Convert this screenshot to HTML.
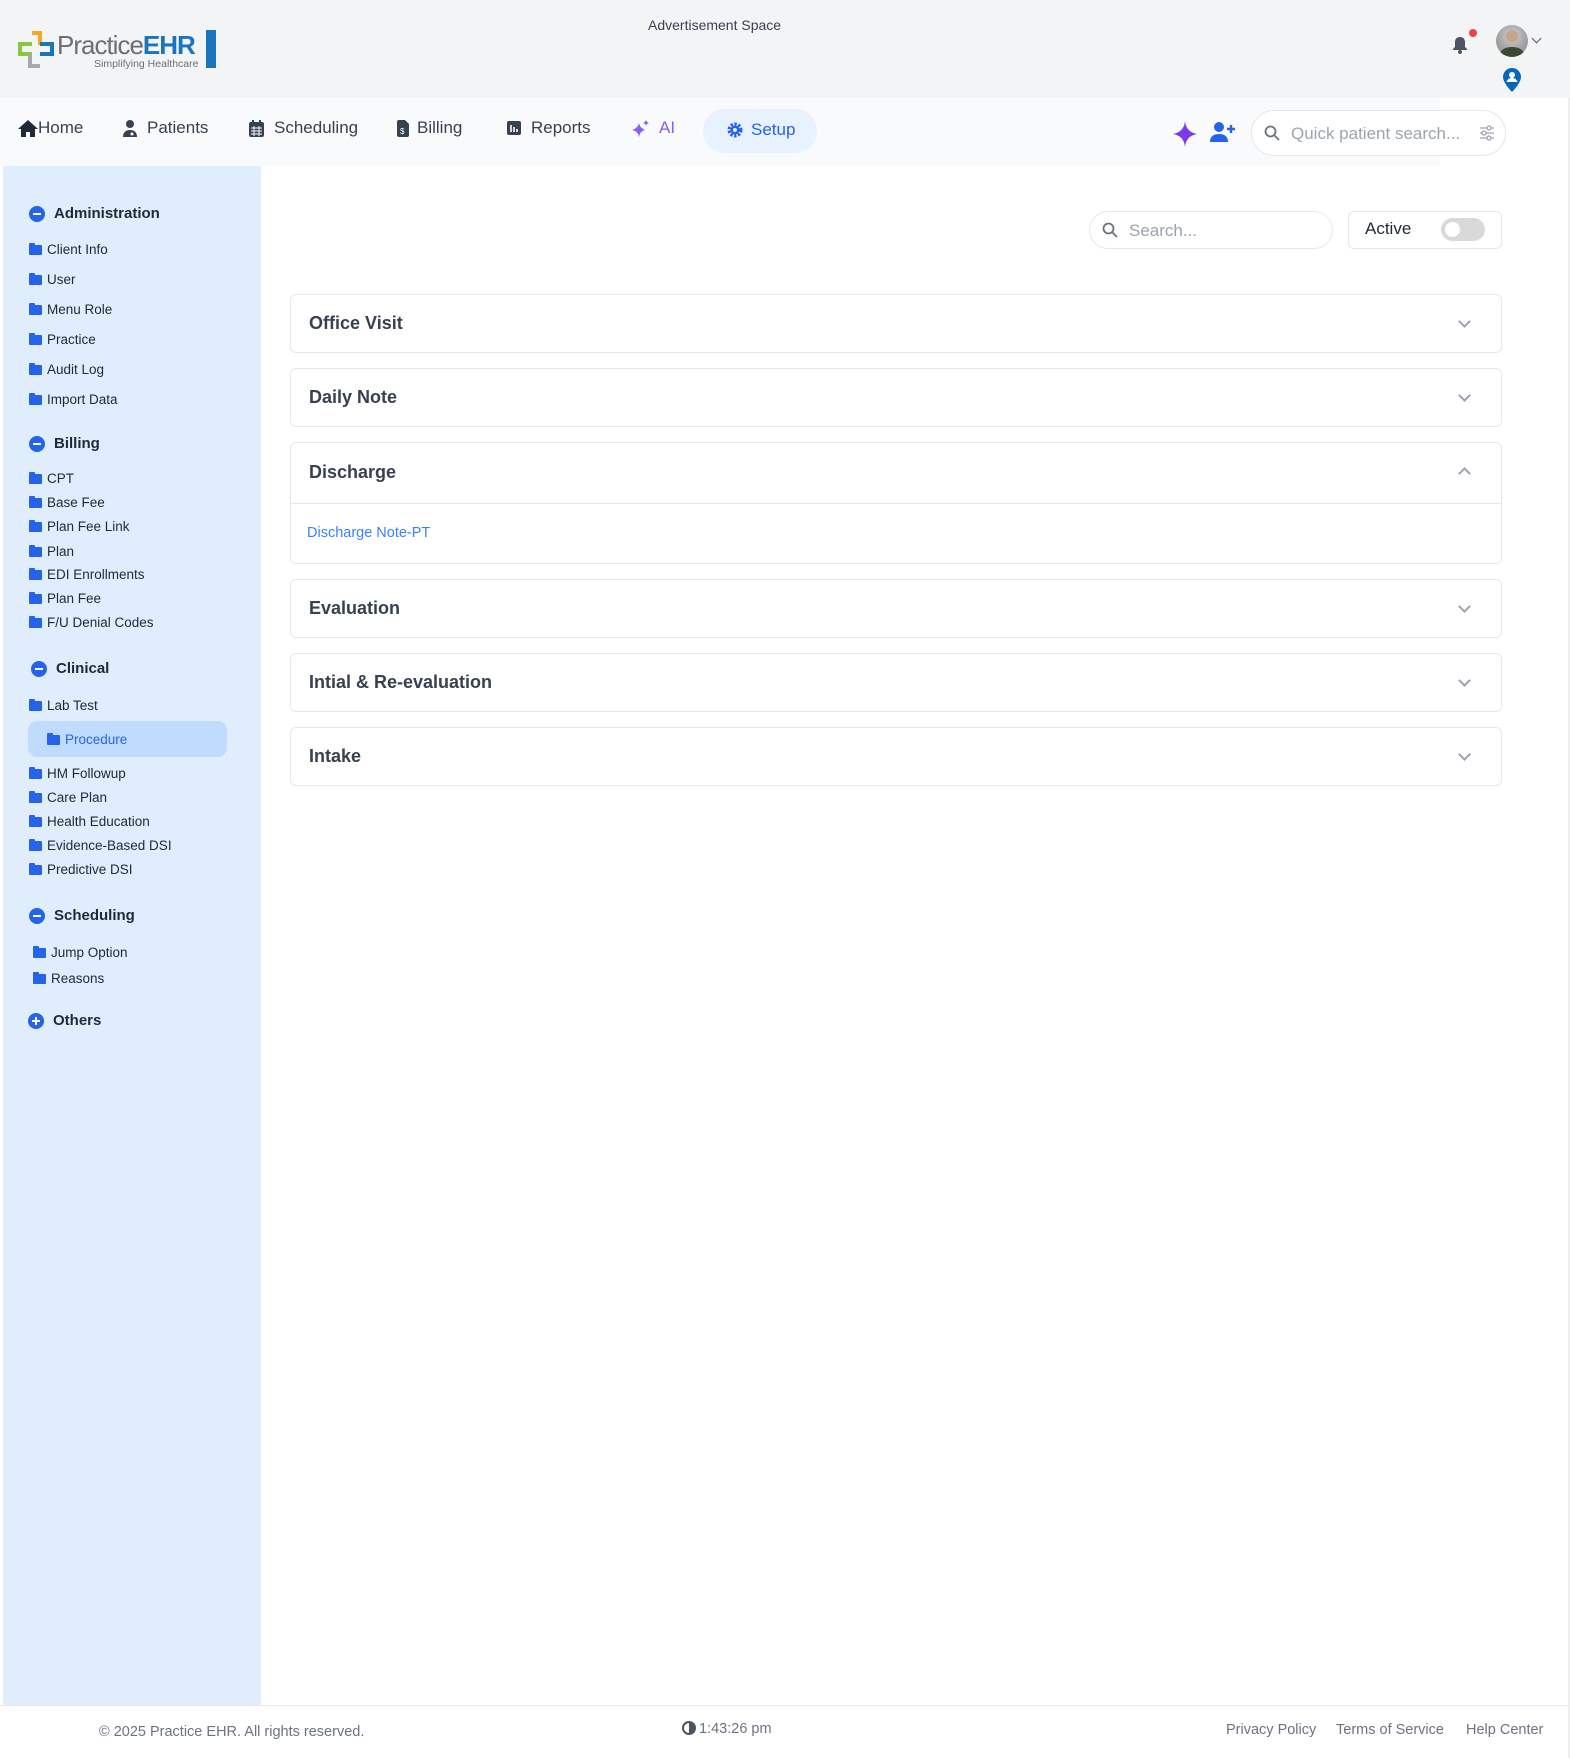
<!DOCTYPE html>
<html><head><meta charset="utf-8">
<style>
*{box-sizing:border-box;margin:0;padding:0}
body{width:1570px;height:1758px;position:relative;background:#fff;font-family:"Liberation Sans",sans-serif;color:#374151;overflow:hidden}
.a{position:absolute;white-space:nowrap}
.hdr{left:0;top:0;width:1570px;height:98px;background:#f3f4f6}
.nav{left:0;top:98px;width:1440px;height:68px;background:#f8fafc}
.side{left:3px;top:166px;width:258px;height:1540px;background:#e0edfc}
.navi{top:118px;font-size:17px;color:#374151;display:flex;align-items:center;gap:8px}
.sh{font-size:15px;font-weight:bold;color:#1f2937;display:flex;align-items:center;gap:9px}
.min{width:16px;height:16px;border-radius:50%;background:#2563eb;position:relative}
.min:after{content:"";position:absolute;left:4px;top:7px;width:8px;height:2px;background:#fff}
.plus:before{content:"";position:absolute;left:7px;top:4px;width:2px;height:8px;background:#fff}
.si{font-size:13.5px;color:#1f2937;display:flex;align-items:center;gap:5px}
.fd{width:13px;height:10px;background:#2563eb;border-radius:1px;position:relative;display:inline-block}
.fd:before{content:"";position:absolute;left:0;top:-2px;width:6px;height:3px;background:#2563eb;border-radius:1px 1px 0 0}
.pn{left:290px;width:1212px;height:59px;border:1px solid #e5e7eb;border-radius:6px;background:#fff}
.pt{position:absolute;left:18px;top:18px;font-size:18px;font-weight:bold;color:#374151}
.chev{position:absolute;right:32px;top:22px;width:9px;height:9px;border-right:2px solid #9ca3af;border-bottom:2px solid #9ca3af;transform:rotate(45deg)}
.ft{font-size:14.5px;color:#6b7280;top:1722px}
</style></head><body>
<div class="a hdr"></div>
<div class="a nav"></div>
<!-- logo -->
<svg class="a" style="left:16px;top:30px" width="40" height="40" viewBox="0 0 40 40">
<path d="M16 1h10v14h-4V5h-6z" fill="#f5a623"/>
<path d="M2 12h14v4H6v6h10v4H2z" fill="#8cc63f"/>
<path d="M12 24h4v10h8v4H12z" fill="#a7a9ac"/>
<path d="M24 12h14v14H24v-4h10v-6H24z" fill="#1a75bc"/>
</svg>
<div class="a" style="left:57px;top:30px;font-size:26px;color:#6d6e71;letter-spacing:-1px">Practice<span style="color:#1a75bc;font-weight:bold">EHR</span></div>
<div class="a" style="left:94px;top:58px;font-size:10.5px;color:#6d6e71">Simplifying Healthcare</div>
<div class="a" style="left:206px;top:30px;width:10px;height:38px;background:#1a75bc"></div>
<div class="a" style="left:648px;top:17px;font-size:14px;color:#374151">Advertisement Space</div>
<!-- bell, avatar -->
<svg class="a" style="left:1452px;top:36px" width="16" height="18" viewBox="0 0 16 18"><path d="M8 1c-3 0-5 2-5 5v5l-2 2v1h14v-1l-2-2V6c0-3-2-5-5-5z" fill="#4b5563"/><circle cx="8" cy="16" r="2" fill="#4b5563"/></svg>
<div class="a" style="left:1469px;top:29px;width:8px;height:8px;border-radius:50%;background:#ef4444"></div>
<div class="a" style="left:1496px;top:25px;width:32px;height:32px;border-radius:50%;background:radial-gradient(circle at 50% 35%,#c9a48a 0 22%,#bdbdbd 24%,#9e9e9e 60%);overflow:hidden"><div style="position:absolute;left:4px;top:22px;width:24px;height:14px;border-radius:50%;background:#3b4a32"></div></div>
<div class="a" style="left:1533px;top:35px;width:7px;height:7px;border-right:1.5px solid #4b5563;border-bottom:1.5px solid #4b5563;transform:rotate(45deg)"></div>
<svg class="a" style="left:1503px;top:68px" width="18" height="24" viewBox="0 0 18 24"><path d="M9 0C4 0 0 4 0 9c0 6 9 15 9 15s9-9 9-15c0-5-4-9-9-9z" fill="#0b67b5"/><circle cx="9" cy="7" r="3" fill="#fff"/><path d="M3.5 14c1-3 3-4 5.5-4s4.5 1 5.5 4z" fill="#fff"/></svg>
<!-- nav -->
<div class="a navi" style="left:18px"><svg width="20" height="17" viewBox="0 0 20 17"><path d="M10 0L0 9h3v8h5v-5h4v5h5V9h3z" fill="#1f2937"/></svg><span style="margin-left:-8px">Home</span></div>
<div class="a navi" style="left:123px"><svg width="14" height="18" viewBox="0 0 14 18"><circle cx="7" cy="5" r="4" fill="#374151"/><path d="M0 18c0-5 3-7 7-7s7 2 7 7z" fill="#374151"/><circle cx="9" cy="15" r="1.5" fill="#f8fafc"/></svg><span style="margin-left:2px">Patients</span></div>
<div class="a navi" style="left:249px"><svg width="15" height="17" viewBox="0 0 15 17"><rect x="0" y="2" width="15" height="15" rx="2" fill="#374151"/><rect x="3" y="0" width="2" height="4" fill="#374151"/><rect x="10" y="0" width="2" height="4" fill="#374151"/><path d="M2 8h11M2 11h11M2 14h11M5 6v10M10 6v10" stroke="#f8fafc" stroke-width="1"/></svg><span style="margin-left:2px">Scheduling</span></div>
<div class="a navi" style="left:397px"><svg width="12" height="17" viewBox="0 0 12 17"><path d="M0 2q0-2 2-2h6l4 4v11q0 2-2 2H2q-2 0-2-2z" fill="#374151"/><text x="3" y="14" font-size="8" fill="#fff" font-family="Liberation Sans">$</text></svg><span>Billing</span></div>
<div class="a navi" style="left:507px"><svg width="14" height="14" viewBox="0 0 14 14"><rect width="14" height="14" rx="2" fill="#374151"/><path d="M4 4v7M7 6v5M10 8v3" stroke="#fff" stroke-width="1.6"/></svg><span style="margin-left:2px">Reports</span></div>
<div class="a navi" style="left:632px;color:#8b5cf6"><svg width="17" height="17" viewBox="0 0 17 17"><path d="M7 3q1 5 6 7q-5 1-6 7q-1-6-7-7q6-2 7-7z" fill="#8b5cf6"/><path d="M14 0q.5 2 3 3q-2.5 .5-3 3q-.5-2.5-3-3q2.5-1 3-3z" fill="#8b5cf6"/></svg><span style="margin-left:2px">AI</span></div>
<div class="a" style="left:703px;top:109px;width:114px;height:44px;border-radius:22px;background:#e8f1fe"></div>
<div class="a navi" style="left:727px;top:120px;color:#2563eb"><svg width="16" height="16" viewBox="0 0 16 16"><circle cx="8" cy="8" r="5.5" fill="none" stroke="#2563eb" stroke-width="4" stroke-dasharray="2.2 1.4"/><circle cx="8" cy="8" r="4.5" fill="#2563eb"/><circle cx="8" cy="8" r="2" fill="#e8f1fe"/></svg><span>Setup</span></div>
<svg class="a" style="left:1173px;top:121px" width="24" height="26" viewBox="0 0 24 26"><path d="M12 0Q13 11 24 13Q13 15 12 26Q11 15 0 13Q11 11 12 0z" fill="#7c3aed"/></svg>
<svg class="a" style="left:1210px;top:122px" width="26" height="20" viewBox="0 0 26 20"><circle cx="9" cy="5" r="5" fill="#2563eb"/><path d="M0 20c0-6 4-8 9-8s9 2 9 8z" fill="#2563eb"/><path d="M21 3v8M17 7h8" stroke="#2563eb" stroke-width="2.4"/></svg>
<div class="a" style="left:1251px;top:110px;width:255px;height:46px;border:1px solid #e5e7eb;border-radius:23px;background:#fff"></div>
<svg class="a" style="left:1264px;top:125px" width="16" height="16" viewBox="0 0 16 16"><circle cx="6.5" cy="6.5" r="5" fill="none" stroke="#6b7280" stroke-width="1.8"/><path d="M10 10l5 5" stroke="#6b7280" stroke-width="1.8"/></svg>
<div class="a" style="left:1291px;top:124px;font-size:17px;color:#9ca3af">Quick patient search...</div>
<svg class="a" style="left:1479px;top:125px" width="16" height="16" viewBox="0 0 16 16"><path d="M1 3h14M1 8h14M1 13h14" stroke="#9ca3af" stroke-width="1.3"/><circle cx="10" cy="3" r="2" fill="#fff" stroke="#9ca3af" stroke-width="1.3"/><circle cx="5" cy="8" r="2" fill="#fff" stroke="#9ca3af" stroke-width="1.3"/><circle cx="10" cy="13" r="2" fill="#fff" stroke="#9ca3af" stroke-width="1.3"/></svg>
<!-- sidebar -->
<div class="a side"></div>
<div class="a sh" style="left:29px;top:205px"><span class="min"></span>Administration</div>
<div class="a si" style="left:29px;top:242px"><i class="fd"></i>Client Info</div>
<div class="a si" style="left:29px;top:272px"><i class="fd"></i>User</div>
<div class="a si" style="left:29px;top:302px"><i class="fd"></i>Menu Role</div>
<div class="a si" style="left:29px;top:332px"><i class="fd"></i>Practice</div>
<div class="a si" style="left:29px;top:362px"><i class="fd"></i>Audit Log</div>
<div class="a si" style="left:29px;top:392px"><i class="fd"></i>Import Data</div>
<div class="a sh" style="left:29px;top:435px"><span class="min"></span>Billing</div>
<div class="a si" style="left:29px;top:471px"><i class="fd"></i>CPT</div>
<div class="a si" style="left:29px;top:495px"><i class="fd"></i>Base Fee</div>
<div class="a si" style="left:29px;top:519px"><i class="fd"></i>Plan Fee Link</div>
<div class="a si" style="left:29px;top:544px"><i class="fd"></i>Plan</div>
<div class="a si" style="left:29px;top:567px"><i class="fd"></i>EDI Enrollments</div>
<div class="a si" style="left:29px;top:591px"><i class="fd"></i>Plan Fee</div>
<div class="a si" style="left:29px;top:615px"><i class="fd"></i>F/U Denial Codes</div>
<div class="a sh" style="left:31px;top:660px"><span class="min"></span>Clinical</div>
<div class="a si" style="left:29px;top:698px"><i class="fd"></i>Lab Test</div>
<div class="a" style="left:28px;top:721px;width:199px;height:36px;border-radius:9px;background:#bfdbfe"></div>
<div class="a si" style="left:47px;top:732px;color:#2563eb"><i class="fd"></i>Procedure</div>
<div class="a si" style="left:29px;top:766px"><i class="fd"></i>HM Followup</div>
<div class="a si" style="left:29px;top:790px"><i class="fd"></i>Care Plan</div>
<div class="a si" style="left:29px;top:814px"><i class="fd"></i>Health Education</div>
<div class="a si" style="left:29px;top:838px"><i class="fd"></i>Evidence-Based DSI</div>
<div class="a si" style="left:29px;top:862px"><i class="fd"></i>Predictive DSI</div>
<div class="a sh" style="left:29px;top:907px"><span class="min"></span>Scheduling</div>
<div class="a si" style="left:33px;top:945px"><i class="fd"></i>Jump Option</div>
<div class="a si" style="left:33px;top:971px"><i class="fd"></i>Reasons</div>
<div class="a sh" style="left:28px;top:1012px"><span class="min plus"></span>Others</div>
<!-- content -->
<div class="a" style="left:1089px;top:211px;width:244px;height:38px;border:1px solid #e5e7eb;border-radius:19px"></div>
<svg class="a" style="left:1102px;top:222px" width="16" height="16" viewBox="0 0 16 16"><circle cx="6.5" cy="6.5" r="5" fill="none" stroke="#6b7280" stroke-width="1.8"/><path d="M10 10l5 5" stroke="#6b7280" stroke-width="1.8"/></svg>
<div class="a" style="left:1129px;top:221px;font-size:17px;color:#9ca3af">Search...</div>
<div class="a" style="left:1348px;top:211px;width:154px;height:38px;border:1px solid #e5e7eb;border-radius:6px"></div>
<div class="a" style="left:1365px;top:219px;font-size:17px;color:#1f2937">Active</div>
<div class="a" style="left:1441px;top:218px;width:44px;height:23px;border-radius:12px;background:#d9d9d9"><div style="position:absolute;left:4px;top:4px;width:15px;height:15px;border-radius:50%;background:#fff"></div></div>
<div class="a pn" style="top:294px"><div class="pt">Office Visit</div><div class="chev"></div></div>
<div class="a pn" style="top:368px"><div class="pt">Daily Note</div><div class="chev"></div></div>
<div class="a pn" style="top:442px;height:122px"><div class="pt" style="top:19px">Discharge</div><div class="chev" style="transform:rotate(225deg);top:26px"></div><div style="position:absolute;left:0;right:0;top:60px;border-top:1px solid #e5e7eb"></div><div style="position:absolute;left:16px;top:82px;font-size:14.5px;color:#3b82f6">Discharge Note-PT</div></div>
<div class="a pn" style="top:579px"><div class="pt">Evaluation</div><div class="chev"></div></div>
<div class="a pn" style="top:653px"><div class="pt">Intial &amp; Re-evaluation</div><div class="chev"></div></div>
<div class="a pn" style="top:727px"><div class="pt">Intake</div><div class="chev"></div></div>
<!-- footer -->
<div class="a" style="left:0;top:1705px;width:1570px;border-top:1px solid #e5e7eb"></div>
<div class="a ft" style="left:99px;top:1724px">© 2025 Practice EHR. All rights reserved.</div>
<div class="a ft" style="left:682px;top:1721px"><span style="display:inline-block;width:14px;height:14px;border:2px solid #4b5563;border-radius:50%;vertical-align:-2px;margin-right:3px;background:linear-gradient(90deg,#fff 50%,#4b5563 50%)"></span>1:43:26 pm</div>
<div class="a ft" style="left:1226px">Privacy Policy</div>
<div class="a ft" style="left:1336px">Terms of Service</div>
<div class="a ft" style="left:1466px">Help Center</div>
<div class="a" style="left:1568px;top:98px;width:2px;height:1660px;background:#eceef1"></div>
</body></html>
